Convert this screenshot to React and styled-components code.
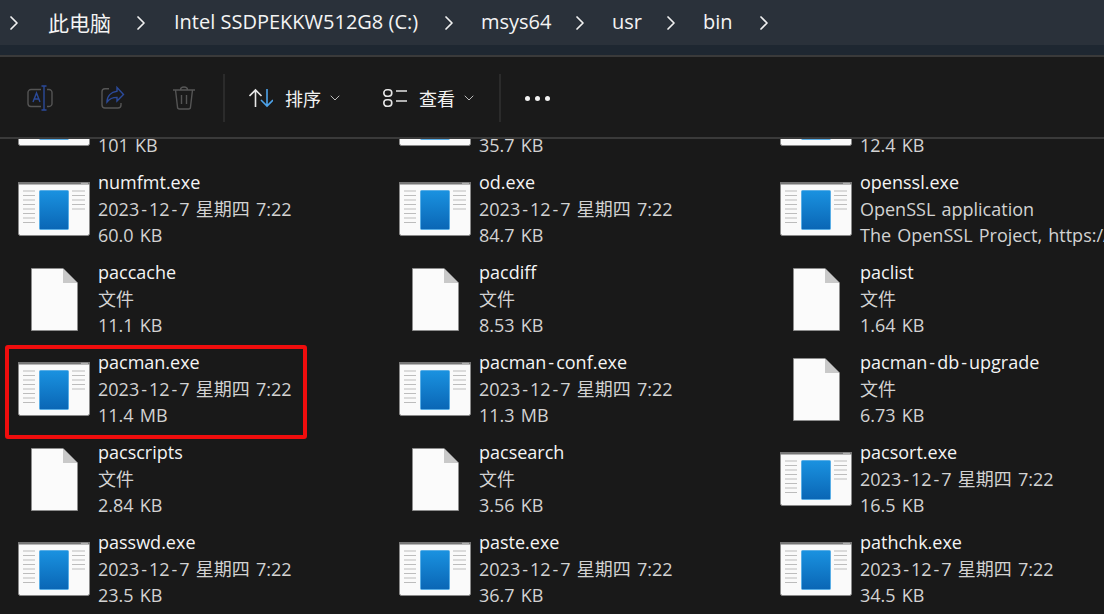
import styled, { createGlobalStyle } from 'styled-components';
import { ChevronRight, ChevronDown } from 'lucide-react';

const GlobalStyle = createGlobalStyle`
  html, body {
    margin: 0;
    padding: 0;
    background: #191919;
  }
  body {
    font-family: "Open Sans", "Noto Sans", "Noto Sans CJK SC", sans-serif;
  }
`

const Stage = styled.div`
  position: relative;
`
const Window = styled.div`
  width: 1104px;
  height: 614px;
  display: flex;
  flex-direction: column;
  overflow: hidden;
  background: #191919;
`
const AddressBar = styled.div`
  height: 45px;
  flex: none;
  display: flex;
  align-items: center;
  padding: 0 0 0 2px;
  box-sizing: border-box;
  background: #2a313a;
  color: #f4f4f4;
  font-size: 20px;
`
const Crumb = styled.span`
  width: ${(p) => p.$width}px;
  flex: none;
  margin-top: -2px;
  white-space: nowrap;
  font-size: ${(p) => p.$size || 20}px;
`
const Chevron = styled(ChevronRight).attrs({ strokeWidth: 1.7 })`
  flex: none;
  width: 24px;
  height: 24px;
  color: #f0f0f0;
  margin-right: ${(p) => p.$after}px;
`
const AddressGap = styled.div`
  height: 10px;
  flex: none;
  background: #1e2731;
`
const Toolbar = styled.div`
  height: 84px;
  flex: none;
  box-sizing: border-box;
  display: flex;
  align-items: center;
  padding-top: 2px;
  border-top: 2px solid #3a3a3a;
  border-bottom: 2px solid #3a3a3a;
  background: #1a1a1a;
  color: #f2f2f2;
  font-size: 18px;
`
const ToolIcon = styled.svg`
  flex: none;
  margin-left: ${(p) => p.$left}px;
`
const Separator = styled.div`
  flex: none;
  width: 2px;
  height: 48px;
  background: #2b2b2b;
  margin-left: ${(p) => p.$left}px;
`
const ToolLabel = styled.span`
  flex: none;
  width: 36px;
  margin-left: ${(p) => p.$left}px;
  font-family: "Noto Sans CJK SC", sans-serif;
  font-size: 18px;
  line-height: 24px;
`
const Caret = styled(ChevronDown).attrs({ strokeWidth: 1.5 })`
  flex: none;
  width: 16px;
  height: 16px;
  margin-left: ${(p) => p.$left}px;
  color: #bcbcbc;
`
const Dots = styled.div`
  flex: none;
  display: flex;
  gap: 5px;
  margin-left: ${(p) => p.$left}px;
`
const Dot = styled.span`
  width: 5px;
  height: 5px;
  border-radius: 50%;
  background: #f2f2f2;
`
const ListClip = styled.div`
  flex: 1;
  overflow: hidden;
`
const FileGrid = styled.div`
  display: grid;
  grid-template-columns: repeat(3, 381px);
  grid-auto-rows: 90px;
  margin-top: -59px;
`
const FileItem = styled.div`
  display: flex;
  align-items: flex-start;
  box-sizing: border-box;
  padding-left: 18px;
  white-space: nowrap;
`
const IconSlot = styled.div`
  width: 80px;
  flex: none;
  display: flex;
  padding: ${(p) => (p.$doc ? '8px 0 0 13px' : '12px 0 0 0')};
  box-sizing: border-box;
`
const FileText = styled.div`
  display: flex;
  flex-direction: column;
`
const Line = styled.div`
  height: 26px;
  line-height: 26px;
  font-size: 18px;
  word-spacing: 1.5px;
  margin-top: ${(p) => (p.$name ? '-1px' : '0')};
  margin-bottom: ${(p) => (p.$name ? '1px' : '0')};
  color: ${(p) => (p.$name ? '#f4f4f4' : '#d2d2d2')};
`
const Dash = styled.span`
  padding: 0 2px;
`
const Highlight = styled.div`
  position: absolute;
  left: 5px;
  top: 345px;
  width: 302px;
  height: 94px;
  box-sizing: border-box;
  border: 4px solid #f00d0d;
  border-radius: 3px;
`

const ExeIcon = () => {
  const left = [190.5, 195, 199.5, 204, 208.5, 213, 217.5, 222]
  const right = [190.5, 195, 199.5, 204, 208.5]
  return (
    <svg width="72" height="54" viewBox="18 182 72 54">
      <defs>
        <linearGradient id="exeBlue" x1="0" y1="0" x2="0" y2="1">
          <stop offset="0" stopColor="#1a92e0" />
          <stop offset="1" stopColor="#0a66b5" />
        </linearGradient>
      </defs>
      <rect x="18.5" y="182.5" width="71" height="53" rx="2" fill="#fafafa" stroke="#8a8a8a" />
      <rect x="18" y="182" width="72" height="2.5" fill="#777" />
      <rect x="81" y="182.8" width="7" height="1" fill="#bdbdbd" />
      <rect x="39.5" y="190.5" width="29" height="39" rx="1" fill="url(#exeBlue)" stroke="#5aaee6" />
      {left.map((y) => <rect key={y} x="23" y={y} width="12" height="1" fill="#bcbcbc" />)}
      {right.map((y) => <rect key={y} x="72" y={y} width="13" height="1" fill="#bcbcbc" />)}
    </svg>
  )
}

const DocIcon = () => (
  <svg width="47" height="63" viewBox="0 0 47 63">
    <path d="M.5.5H32L46.5 15V62.5H.5Z" fill="#fbfbfb" stroke="#8d8d8d" />
    <path d="M32 .5V15H46.5Z" fill="#c9c9c9" />
  </svg>
)

// Explorer's hyphen is a good deal wider than the one in our font
const withDashes = (text) =>
  text.split('-').map((part, i) => (
    <span key={i}>{i > 0 && <Dash>-</Dash>}{part}</span>
  ))

const files = [
  { kind: 'exe', lines: ['', '', '101 KB'] },
  { kind: 'exe', lines: ['', '', '35.7 KB'] },
  { kind: 'exe', lines: ['', '', '12.4 KB'] },
  { kind: 'exe', lines: ['numfmt.exe', '2023-12-7 星期四 7:22', '60.0 KB'] },
  { kind: 'exe', lines: ['od.exe', '2023-12-7 星期四 7:22', '84.7 KB'] },
  { kind: 'exe', lines: ['openssl.exe', 'OpenSSL application', 'The OpenSSL Project, https://www.openssl.org/'] },
  { kind: 'doc', lines: ['paccache', '文件', '11.1 KB'] },
  { kind: 'doc', lines: ['pacdiff', '文件', '8.53 KB'] },
  { kind: 'doc', lines: ['paclist', '文件', '1.64 KB'] },
  { kind: 'exe', lines: ['pacman.exe', '2023-12-7 星期四 7:22', '11.4 MB'] },
  { kind: 'exe', lines: ['pacman-conf.exe', '2023-12-7 星期四 7:22', '11.3 MB'] },
  { kind: 'doc', lines: ['pacman-db-upgrade', '文件', '6.73 KB'] },
  { kind: 'doc', lines: ['pacscripts', '文件', '2.84 KB'] },
  { kind: 'doc', lines: ['pacsearch', '文件', '3.56 KB'] },
  { kind: 'exe', lines: ['pacsort.exe', '2023-12-7 星期四 7:22', '16.5 KB'] },
  { kind: 'exe', lines: ['passwd.exe', '2023-12-7 星期四 7:22', '23.5 KB'] },
  { kind: 'exe', lines: ['paste.exe', '2023-12-7 星期四 7:22', '36.7 KB'] },
  { kind: 'exe', lines: ['pathchk.exe', '2023-12-7 星期四 7:22', '34.5 KB'] },
]

export default function App() {
  return (
    <Stage>
      <GlobalStyle />
      <Window>
        <AddressBar>
          <Chevron $after={22} />
          <Crumb $width={81} $size={21}>此电脑</Crumb>
          <Chevron $after={21} />
          <Crumb $width={263}>Intel SSDPEKKW512G8 (C:)</Crumb>
          <Chevron $after={20} />
          <Crumb $width={87}>msys64</Crumb>
          <Chevron $after={20} />
          <Crumb $width={47}>usr</Crumb>
          <Chevron $after={20} />
          <Crumb $width={49}>bin</Crumb>
          <Chevron $after={0} />
        </AddressBar>
        <AddressGap />
        <Toolbar>
          <ToolIcon $left={27} width="26" height="26" viewBox="0 0 26 26" fill="none" strokeWidth="1.4">
            <path d="M14 4.5H4a3 3 0 0 0-3 3v11a3 3 0 0 0 3 3h10M20 4.5h2a3 3 0 0 1 3 3v11a3 3 0 0 1-3 3h-2" stroke="#555" />
            <path d="M6 17l3.5-9 3.5 9M7.2 14h4.6M17 1v24M14.5 1h5M14.5 25h5" stroke="#2b4a9a" />
          </ToolIcon>
          <ToolIcon $left={47} width="26" height="26" viewBox="0 0 26 26" fill="none" strokeWidth="1.4">
            <path d="M9 3.7H5a3 3 0 0 0-3 3V20a3 3 0 0 0 3 3h13a3 3 0 0 0 3-3v-2" stroke="#555" />
            <path d="M17 2.5l6.5 7-6.500 6.500v-3.600c-4 0-7.500 1.300-10 4.600 0-6 4-10 10-10.800Z" stroke="#2b4a9a" />
          </ToolIcon>
          <ToolIcon $left={46} width="24" height="26" viewBox="0 0 24 26" fill="none" stroke="#555" strokeWidth="1.4">
            <path d="M1 5h22M8.500 5c0-4 7-4 7 0M3.500 5l2 17a2 2 0 0 0 2 2h9a2 2 0 0 0 2-2l2-17M9.500 10v9M14.500 10v9" />
          </ToolIcon>
          <Separator $left={27} />
          <ToolIcon $left={24} width="24" height="20" viewBox="0 0 24 20" fill="none" strokeWidth="1.6">
            <path d="M6.500 19V2M.5 8l6-6 6 6" stroke="#e8e8e8" />
            <path d="M18 1v17M12 12l6 6 6-6" stroke="#4da3ea" />
          </ToolIcon>
          <ToolLabel $left={12}>排序</ToolLabel>
          <Caret $left={6} />
          <ToolIcon $left={39} width="26" height="20" viewBox="0 0 26 20" fill="none" stroke="#e4e4e4" strokeWidth="1.6">
            <rect x="1.800" y="1.800" width="8" height="6.500" rx="3.200" />
            <rect x="1.800" y="11.800" width="8" height="6.500" rx="3.200" />
            <path d="M14 3h11M14 13h11" />
          </ToolIcon>
          <ToolLabel $left={11}>查看</ToolLabel>
          <Caret $left={6} />
          <Separator $left={22} />
          <Dots $left={24}>
            <Dot />
            <Dot />
            <Dot />
          </Dots>
        </Toolbar>
        <ListClip>
          <FileGrid>
            {files.map((f, i) => (
              <FileItem key={i}>
                <IconSlot $doc={f.kind === 'doc'}>
                  {f.kind === 'exe' ? <ExeIcon /> : <DocIcon />}
                </IconSlot>
                <FileText>
                  <Line $name>{withDashes(f.lines[0])}</Line>
                  <Line>{withDashes(f.lines[1])}</Line>
                  <Line>{f.lines[2]}</Line>
                </FileText>
              </FileItem>
            ))}
          </FileGrid>
        </ListClip>
      </Window>
      <Highlight />
    </Stage>
  )
}
